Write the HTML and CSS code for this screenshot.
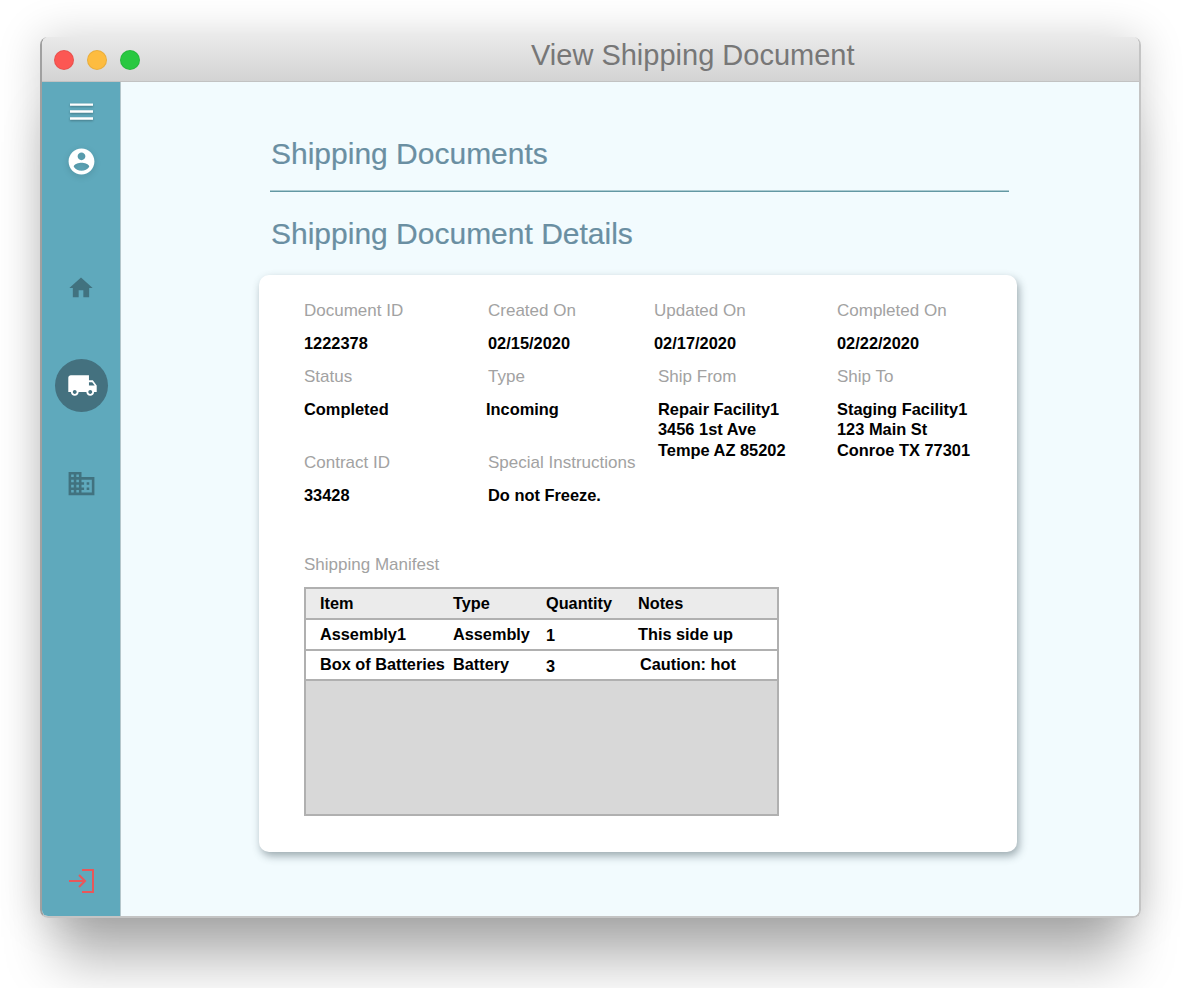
FILE: index.html
```html
<!DOCTYPE html>
<html lang="en">
<head>
  <meta charset="UTF-8">
  <title>View Shipping Document</title>
  <link rel="stylesheet" href="styles.css">
</head>
<body>
  <div class="window">
    <div class="titlebar">
      <span class="light red"></span>
      <span class="light yellow"></span>
      <span class="light green"></span>
      <div class="title">View Shipping Document</div>
    </div>

    <div class="app">
      <div class="sidebar">
        <svg class="icon-menu" viewBox="0 0 24 24"><path d="M0 3h24v2.4H0zM0 10.3h24v2.4H0zM0 17.6h24V20H0z"/></svg>
        <svg class="icon-user" viewBox="0 0 24 24"><path d="M12 2C6.48 2 2 6.48 2 12s4.48 10 10 10 10-4.48 10-10S17.52 2 12 2zm0 3c1.66 0 3 1.34 3 3s-1.34 3-3 3-3-1.34-3-3 1.34-3 3-3zm0 14.2c-2.5 0-4.71-1.28-6-3.22.03-1.99 4-3.08 6-3.08 1.99 0 5.97 1.09 6 3.08-1.29 1.94-3.5 3.22-6 3.22z"/></svg>
        <svg class="icon-home" viewBox="0 0 24 24"><path d="M10 20v-6h4v6h5v-8h3L12 3 2 12h3v8z"/></svg>
        <div class="truck-circle">
          <svg viewBox="0 0 24 24"><path d="M20 8h-3V4H3c-1.1 0-2 .9-2 2v11h2c0 1.66 1.34 3 3 3s3-1.34 3-3h6c0 1.66 1.34 3 3 3s3-1.34 3-3h2v-5l-3-4zM6 18.5c-.83 0-1.5-.67-1.5-1.5s.67-1.5 1.5-1.5 1.5.67 1.5 1.5-.67 1.5-1.5 1.5zm13.5-9l1.96 2.5H17V9.5h2.5zm-1.5 9c-.83 0-1.5-.67-1.5-1.5s.67-1.5 1.5-1.5 1.5.67 1.5 1.5-.67 1.5-1.5 1.5z"/></svg>
        </div>
        <svg class="icon-building" viewBox="0 0 24 24"><path d="M12 7V3H2v18h20V7H12zM6 19H4v-2h2v2zm0-4H4v-2h2v2zm0-4H4V9h2v2zm0-4H4V5h2v2zm4 12H8v-2h2v2zm0-4H8v-2h2v2zm0-4H8V9h2v2zm0-4H8V5h2v2zm10 12h-8v-2h2v-2h-2v-2h2v-2h-2V9h8v10zm-2-8h-2v2h2v-2zm0 4h-2v2h2v-2z"/></svg>
        <svg class="icon-exit" viewBox="0 0 26 24"><path d="M14 1h11v22H14M1 12h16M11 6l6 6-6 6"/></svg>
      </div>

      <div class="main">
        <h2 class="heading">Shipping Documents</h2>
        <div class="divider"></div>
        <h2 class="heading second">Shipping Document Details</h2>

        <div class="card">
          <div class="fields">
            <div class="field"><div class="lbl">Document ID</div><div class="val">1222378</div></div>
            <div class="field"><div class="lbl">Created On</div><div class="val">02/15/2020</div></div>
            <div class="field"><div class="lbl">Updated On</div><div class="val">02/17/2020</div></div>
            <div class="field"><div class="lbl">Completed On</div><div class="val">02/22/2020</div></div>

            <div class="field short"><div class="lbl">Status</div><div class="val">Completed</div></div>
            <div class="field short"><div class="lbl">Type</div><div class="val nudge-left">Incoming</div></div>
            <div class="field tall nudge-right"><div class="lbl">Ship From</div><div class="val">Repair Facility1<br>3456 1st Ave<br>Tempe AZ 85202</div></div>
            <div class="field tall"><div class="lbl">Ship To</div><div class="val">Staging Facility1<br>123 Main St<br>Conroe TX 77301</div></div>

            <div class="field"><div class="lbl">Contract ID</div><div class="val">33428</div></div>
            <div class="field"><div class="lbl">Special Instructions</div><div class="val">Do not Freeze.</div></div>
          </div>

          <div class="lbl manifest-lbl">Shipping Manifest</div>
          <div class="manifest">
            <table>
              <tr>
                <th class="col-item">Item</th>
                <th class="col-type">Type</th>
                <th class="col-qty">Quantity</th>
                <th>Notes</th>
              </tr>
              <tr>
                <td class="col-item">Assembly1</td>
                <td>Assembly</td>
                <td class="qty">1</td>
                <td>This side up</td>
              </tr>
              <tr>
                <td class="col-item">Box of Batteries</td>
                <td>Battery</td>
                <td class="qty">3</td>
                <td class="note-shift">Caution: hot</td>
              </tr>
            </table>
          </div>
        </div>
      </div>
    </div>
  </div>
</body>
</html>
```

FILE: styles.css
```css
html, body {
  margin: 0;
  height: 100%;
  overflow: hidden;
}
body {
  background: #fff;
  font-family: "Liberation Sans", Arial, sans-serif;
  padding: 37px 0 0 40px;
  box-sizing: border-box;
}
.window {
  width: 1101px;
  height: 881px;
  box-sizing: border-box;
  border-radius: 8px;
  display: flex;
  flex-direction: column;
  overflow: hidden;
  border: solid #c4c4c4;
  border-width: 0 2px 2px 2px;
  border-left-color: #a0a0a0;
  box-shadow: 0 0 44px rgba(0,0,0,.18), 0 62px 50px -18px rgba(0,0,0,.28);
}
.titlebar {
  height: 45px;
  flex: none;
  display: flex;
  align-items: center;
  padding: 0 0 0 12px;
  gap: 13px;
  box-sizing: border-box;
  background: linear-gradient(#e9e9e9, #d3d3d3);
  border-bottom: 1px solid #c2c2c2;
}
.light {
  width: 20px;
  height: 20px;
  margin-top: 1px;
  box-sizing: border-box;
  border-radius: 50%;
  border: 1px solid rgba(0,0,0,.08);
}
.red { background: #fc5753; }
.yellow { background: #fdbc40; }
.green { background: #28c840; }
.title {
  margin-left: 378px;
  margin-top: -7px;
  font-size: 29px;
  color: #777;
  white-space: nowrap;
}
.app {
  flex: 1;
  display: flex;
  min-height: 0;
}
.sidebar {
  width: 79px;
  flex: none;
  box-sizing: border-box;
  background: #5fa9bc;
  border-right: 1px solid #b4c6cb;
  display: flex;
  flex-direction: column;
  align-items: center;
  padding-top: 18px;
  fill: #41727f;
}
.icon-menu {
  width: 23px;
  height: 24px;
  fill: #fff;
  filter: drop-shadow(0 1px 1px rgba(0,0,0,.3));
}
.icon-user {
  width: 31px;
  height: 31px;
  margin-top: 22px;
  fill: #fff;
  filter: drop-shadow(0 2px 3px rgba(0,0,0,.15));
}
.icon-home {
  width: 28px;
  height: 28px;
  margin-top: 97px;
}
.truck-circle {
  width: 53px;
  height: 53px;
  margin-top: 57px;
  border-radius: 50%;
  background: #44717f;
  display: flex;
  align-items: center;
  justify-content: center;
  fill: #fff;
}
.truck-circle svg {
  width: 31px;
  height: 31px;
  margin-left: 3px;
}
.icon-building {
  width: 31px;
  height: 31px;
  margin-top: 56px;
}
.icon-exit {
  width: 26px;
  height: 24px;
  margin-top: auto;
  margin-bottom: 23px;
  fill: none;
  stroke: #e8575a;
  stroke-width: 2;
}
.main {
  flex: 1;
  background: #f2fbfe;
  padding: 0 0 0 138px;
}
.heading {
  margin: 53px 0 0 12px;
  font-size: 30px;
  line-height: 38px;
  font-weight: normal;
  color: #6a8fa2;
  -webkit-text-stroke: .2px #6a8fa2;
}
.heading.second {
  margin-top: 23px;
}
.divider {
  width: 739px;
  height: 2px;
  margin: 17px 0 0 11px;
  background: linear-gradient(#d0e4e8, #3f7f8c);
}
.card {
  width: 758px;
  height: 577px;
  margin-top: 22px;
  box-sizing: border-box;
  padding: 25px 0 0 45px;
  background: #fff;
  border-radius: 10px;
  box-shadow: 2px 4px 8px rgba(50,70,80,.45);
}
.fields {
  display: grid;
  grid-template-columns: 184px 166px 183px 1fr;
  row-gap: 12px;
}
.lbl {
  padding-top: 1px;
  font-size: 17px;
  line-height: 20px;
  color: #a2a2a2;
}
.val {
  margin-top: 12px;
  font-size: 16.4px;
  line-height: 20.5px;
  font-weight: bold;
  color: #000;
}
.short {
  margin-bottom: 21px;
}
.tall {
  grid-row: span 2;
}
.nudge-left {
  margin-left: -2px;
}
.nudge-right {
  margin-left: 4px;
}
.manifest-lbl {
  margin-top: 48px;
}
.manifest {
  width: 475px;
  height: 229px;
  margin-top: 12px;
  box-sizing: border-box;
  border: 2px solid #b0b0b0;
  background: #d8d8d8;
}
table {
  width: 100%;
  table-layout: fixed;
  border-collapse: separate;
  border-spacing: 0;
  font-size: 16.3px;
  color: #000;
}
th, td {
  height: 31px;
  box-sizing: border-box;
  padding: 0;
  text-align: left;
  font-weight: bold;
  background: #fff;
  border-bottom: 2px solid #b0b0b0;
}
tr:last-child td {
  height: 30px;
}
th {
  background: #ebebeb;
}
.col-item {
  width: 147px;
  padding-left: 14px;
}
.col-type {
  width: 93px;
}
.col-qty {
  width: 92px;
}
.qty {
  padding-top: 3px;
}
.note-shift {
  padding-left: 2px;
}
```
